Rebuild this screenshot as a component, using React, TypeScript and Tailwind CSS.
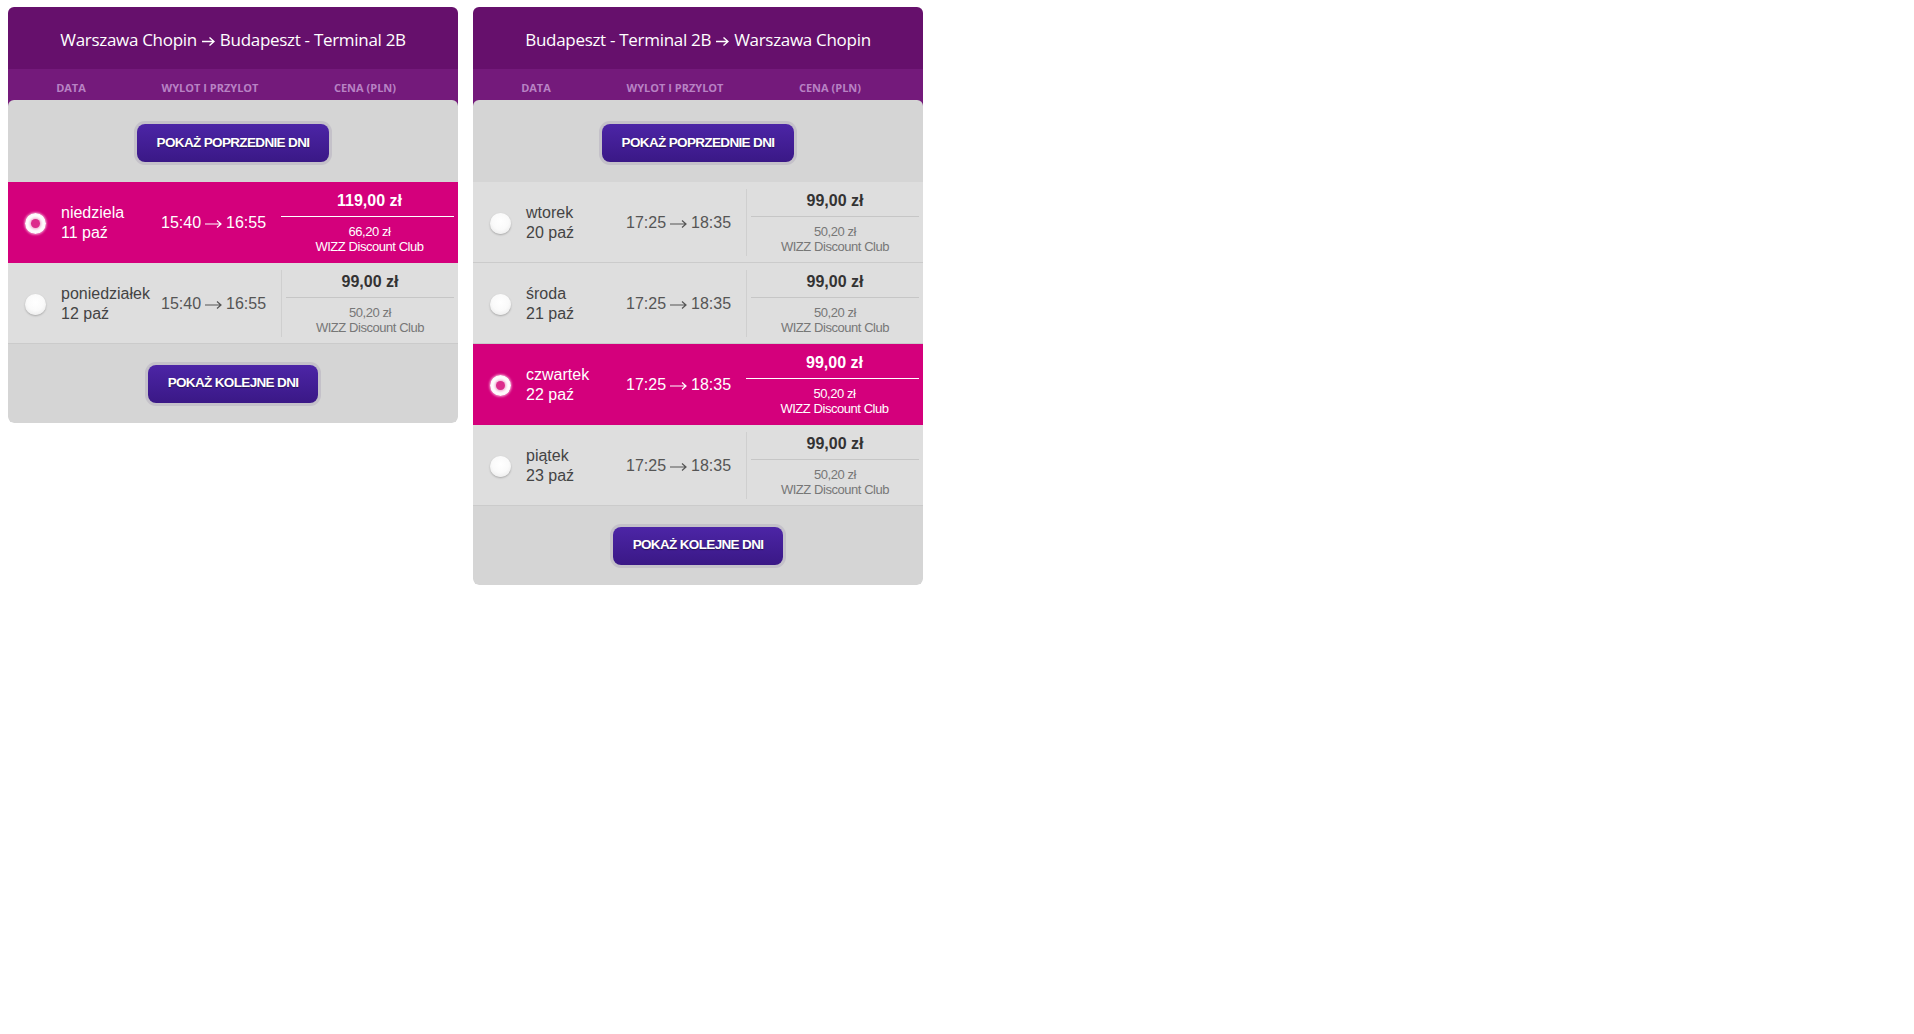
import React from 'react';

type Flight = {
  day: string;
  date: string;
  dep: string;
  arr: string;
  price: string;
  club: string;
  selected?: boolean;
};

type Leg = {
  from: string;
  to: string;
  flights: Flight[];
};

const legs: Leg[] = [
  {
    from: 'Warszawa Chopin',
    to: 'Budapeszt - Terminal 2B',
    flights: [
      { day: 'niedziela', date: '11 paź', dep: '15:40', arr: '16:55', price: '119,00 zł', club: '66,20 zł', selected: true },
      { day: 'poniedziałek', date: '12 paź', dep: '15:40', arr: '16:55', price: '99,00 zł', club: '50,20 zł' },
    ],
  },
  {
    from: 'Budapeszt - Terminal 2B',
    to: 'Warszawa Chopin',
    flights: [
      { day: 'wtorek', date: '20 paź', dep: '17:25', arr: '18:35', price: '99,00 zł', club: '50,20 zł' },
      { day: 'środa', date: '21 paź', dep: '17:25', arr: '18:35', price: '99,00 zł', club: '50,20 zł' },
      { day: 'czwartek', date: '22 paź', dep: '17:25', arr: '18:35', price: '99,00 zł', club: '50,20 zł', selected: true },
      { day: 'piątek', date: '23 paź', dep: '17:25', arr: '18:35', price: '99,00 zł', club: '50,20 zł' },
    ],
  },
];

// thin right arrow, like the "→" glyph in the original
function Arrow({ w, h, stroke }: { w: number; h: number; stroke: number }) {
  return (
    <svg width={w} height={h} viewBox={`0 0 ${w} ${h}`} className="inline-block align-middle" fill="none">
      <path
        d={`M0 ${h / 2}H${w - 1}M${w - 1 - h / 2} 0.5L${w - 1} ${h / 2}L${w - 1 - h / 2} ${h - 0.5}`}
        stroke="currentColor"
        strokeWidth={stroke}
      />
    </svg>
  );
}

function PurpleButton({ children }: { children: React.ReactNode }) {
  return (
    <button className="h-[38px] rounded-[8px] bg-gradient-to-b from-[#4c25a6] to-[#3a1886] px-[20px] text-[13.5px] font-bold uppercase tracking-[-0.65px] text-white shadow-[0_0_0_3px_#c4c1c9] [font-family:'Liberation_Sans',Arial,sans-serif] [text-shadow:0_1px_1px_rgba(0,0,0,0.45)]">
      {children}
    </button>
  );
}

function Radio({ checked }: { checked?: boolean }) {
  if (checked) {
    return (
      <span className="flex h-[21px] w-[21px] items-center justify-center rounded-full bg-[radial-gradient(circle,#fff_55%,#f6d9e8_100%)] shadow-[0_0_2px_1px_rgba(255,190,225,0.6)]">
        <span className="h-[9px] w-[9px] rounded-full bg-[#dc2c8c] shadow-[0_0_3px_1px_rgba(226,80,160,0.6)]" />
      </span>
    );
  }
  return (
    <span className="block h-[21px] w-[21px] rounded-full bg-[radial-gradient(circle_at_50%_40%,#ffffff_0,#fafafa_50%,#e4e4e4_100%)] shadow-[0_1px_2px_rgba(0,0,0,0.25)]" />
  );
}

function FlightRow({ f }: { f: Flight }) {
  const sel = f.selected;
  return (
    <div
      className={`flex h-[81px] items-center border-b ${
        sel ? 'border-[#d4007c] bg-[#d4007c]' : 'border-[#cbcbcb] bg-[#dedede]'
      }`}
    >
      <div className="w-[53px] pl-[17px] pt-[2px]">
        <Radio checked={sel} />
      </div>
      <div className={`w-[100px] pt-[2px] text-[16px] leading-[20px] ${sel ? 'text-white' : 'text-[#444]'}`}>
        <div>{f.day}</div>
        <div>{f.date}</div>
      </div>
      <div className={`flex w-[120px] items-center gap-[4px] pt-[2px] text-[16px] ${sel ? 'text-white' : 'text-[#555]'}`}>
        <span>{f.dep}</span>
        <span className="pt-[1px]">
          <Arrow w={17} h={8} stroke={1.2} />
        </span>
        <span>{f.arr}</span>
      </div>
      <div className={`h-[67px] flex-1 pt-[2px] ${sel ? '' : 'border-l border-[#cfcfcf]'}`}>
        <div className={`h-[20px] text-center text-[16px] font-bold leading-[20px] ${sel ? 'text-white' : 'text-[#333]'}`}>
          {f.price}
        </div>
        <div className={`mt-[5px] h-px ${sel ? 'mr-[4px] bg-white' : 'mx-[4px] bg-[#c6c6c6]'}`} />
        <div
          className={`mt-[7px] text-center text-[13px] leading-[15px] tracking-[-0.45px] ${
            sel ? 'text-white' : 'text-[#777]'
          }`}
        >
          <div>{f.club}</div>
          <div>WIZZ Discount Club</div>
        </div>
      </div>
    </div>
  );
}

function LegPanel({ leg }: { leg: Leg }) {
  return (
    <div className="w-[450px] overflow-hidden rounded-[6px]">
      <div className="flex h-[62px] items-center justify-center gap-[5px] bg-[#66106c] pt-[3px] text-[17px] tracking-[-0.3px] text-white [font-family:'Open_Sans',sans-serif]">
        <span>{leg.from}</span>
        <span className="pt-[1px]">
          <Arrow w={13} h={9} stroke={1.4} />
        </span>
        <span>{leg.to}</span>
      </div>
      <div className="flex h-[37px] items-center bg-[#741a7b] pt-[1px] text-[11px] font-bold text-[#b882c4] [font-family:'Open_Sans',sans-serif]">
        <div className="w-[126px] text-center">DATA</div>
        <div className="w-[152px] text-center">WYLOT I PRZYLOT</div>
        <div className="w-[158px] text-center">CENA (PLN)</div>
      </div>
      <div className="relative -mt-[6px] rounded-[6px] bg-[#d5d5d5] [font-family:'Liberation_Sans',Arial,sans-serif]">
        <div className="flex h-[82px] items-center justify-center pt-[4px]">
          <PurpleButton>Pokaż poprzednie dni</PurpleButton>
        </div>
        {leg.flights.map((f, i) => (
          <FlightRow key={i} f={f} />
        ))}
        <div className="flex h-[79px] items-center justify-center">
          <PurpleButton>Pokaż kolejne dni</PurpleButton>
        </div>
      </div>
    </div>
  );
}

export default function App() {
  return (
    <div className="min-h-screen bg-white pl-[8px] pt-[7px]">
      <div className="flex items-start gap-[15px]">
        {legs.map((leg, i) => (
          <LegPanel key={i} leg={leg} />
        ))}
      </div>
    </div>
  );
}
